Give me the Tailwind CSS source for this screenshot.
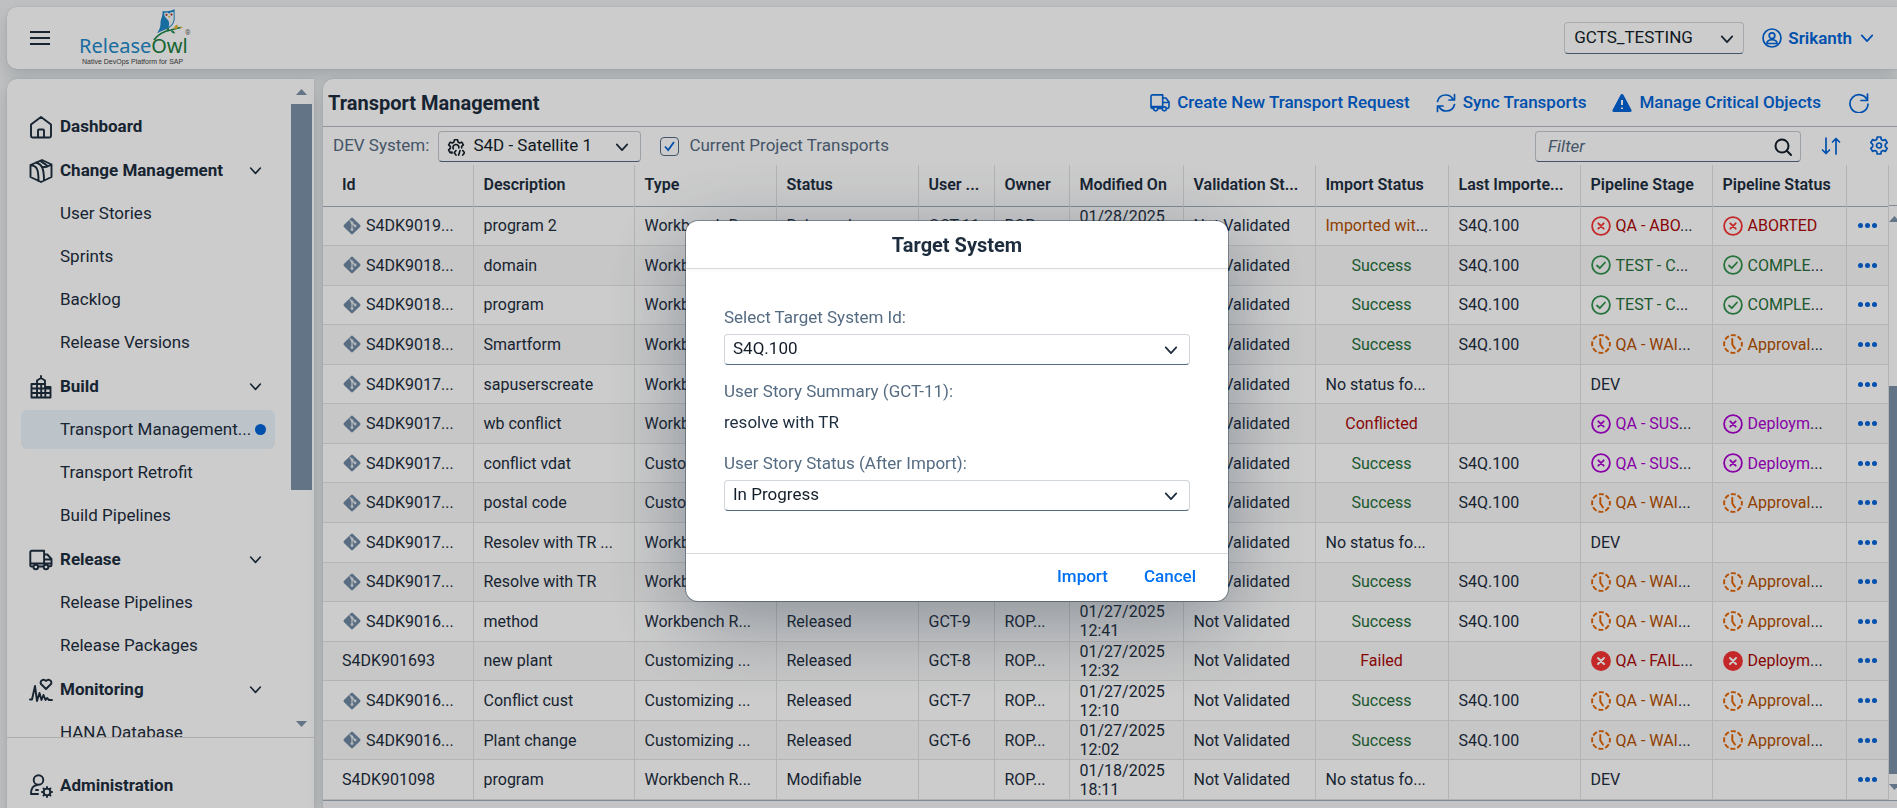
<!DOCTYPE html>
<html lang="en">
<head>
<meta charset="utf-8">
<title>ReleaseOwl - Transport Management</title>
<script src="https://cdn.jsdelivr.net/npm/@tailwindcss/browser@4"></script>
</head>
<body class="h-screen overflow-hidden bg-[#eff1f2] font-['Roboto',sans-serif] text-base text-[#1d2d3e]">
<svg class="hidden" aria-hidden="true">
  <symbol id="chev" viewBox="0 0 16 16"><path d="M2 5l6 6.500L14 5" fill="none" stroke="currentColor" stroke-width="2" stroke-linecap="round" stroke-linejoin="round"/></symbol>
  <symbol id="git" viewBox="0 0 18 18"><path d="M9 .5a1.200 1.200 0 0 1 .9.400l7.200 7.200a1.300 1.300 0 0 1 0 1.800l-7.200 7.200a1.300 1.300 0 0 1-1.800 0L.9 9.900a1.300 1.300 0 0 1 0-1.800L8.100.9A1.200 1.200 0 0 1 9 .5z" fill="#7089a3"/><path d="M6.800 3.400 9 5.600v7M9 6l3 3" stroke="#e4e8ec" stroke-width="1.200" fill="none"/><g fill="#e4e8ec"><circle cx="9" cy="5.800" r="1.400"/><circle cx="9" cy="12.600" r="1.400"/><circle cx="12.100" cy="9" r="1.400"/></g></symbol>
  <symbol id="x" viewBox="0 0 20 20"><g fill="none" stroke="currentColor" stroke-width="1.800"><circle cx="10" cy="10" r="8.900"/><path d="m7.300 7.300 5.400 5.400m0-5.400-5.400 5.400" stroke-linecap="round"/></g></symbol>
  <symbol id="xf" viewBox="0 0 20 20"><circle cx="10" cy="10" r="9.900" fill="currentColor"/><path d="m7 7 6 6m0-6-6 6" stroke="#fff" stroke-width="2" stroke-linecap="round"/></symbol>
  <symbol id="ok" viewBox="0 0 20 20"><g fill="none" stroke="currentColor" stroke-width="1.800"><circle cx="10" cy="10" r="8.900"/><path d="m6 10.500 2.800 2.700L14 7.500" stroke-linecap="round" stroke-linejoin="round"/></g></symbol>
  <symbol id="wait" viewBox="0 0 20 20"><g fill="none" stroke="currentColor" stroke-width="1.900"><circle cx="10" cy="10" r="8.900" stroke-dasharray="5 1.990" stroke-dashoffset="2.500"/><path d="M9.300 5v5.500l2.700 4" stroke-linecap="round" stroke-linejoin="round"/></g></symbol>
  <symbol id="gear" viewBox="0 0 20 20"><g fill="none" stroke="currentColor" stroke-width="1.700" stroke-linejoin="round"><path d="M8.200 1h3.600l.5 2.500 1.700 1 2.400-.9 1.800 3.100-1.900 1.700v2.200l1.900 1.700-1.800 3.100-2.400-.9-1.700 1-.5 2.500H8.200l-.5-2.500-1.700-1-2.400.9-1.800-3.100 1.900-1.700V8.400L1.800 6.700l1.800-3.100 2.400.9 1.700-1z"/><circle cx="10" cy="9.500" r="2.500"/></g></symbol>
  <symbol id="truck" viewBox="0 0 22 20"><g fill="none" stroke="currentColor" stroke-width="1.800" stroke-linejoin="round"><path d="M4 16H2.500a1.500 1.500 0 0 1-1.500-1.500v-12A1.500 1.500 0 0 1 2.500 1H14v13M14 4.500h3.500L21 9v5.500a1.500 1.500 0 0 1-1.500 1.500H18M8.500 16h5M14 9.500h7M1 14h13"/><circle cx="6.200" cy="16.500" r="2.200"/><circle cx="15.800" cy="16.500" r="2.200"/></g></symbol>
</svg>

<div class="flex h-full flex-col gap-[10px] pl-[7px] pt-[7px]">
  <header class="flex h-[62px] shrink-0 items-center rounded-l-[10px] bg-white pr-[23px] shadow-[0_0_2px_#22354829,0_8px_16px_#22354829]">
    <button class="ml-[23px] flex h-[30px] w-5 items-center" aria-label="Menu"><svg class="h-4 w-5" viewBox="0 0 20 16"><path d="M0 2h20M0 8h20M0 14h20" stroke="#1d2d3e" stroke-width="1.800"/></svg></button>
    <a href="#" class="relative ml-[29px] block h-[62px] w-[110px] leading-none" aria-label="ReleaseOwl">
      <svg class="absolute left-[71px] top-0 h-10 w-9" viewBox="0 0 36 40">
        <path d="M12.500 4c2 .6 4 .2 6 0 2.500-.2 4.500-.8 6-2 .4 3.500 0 5 .2 8 .3 5-1.700 8.500-5.700 11-4 1.800-8 3-12 5.500 2.500-4 3.500-6.500 3.500-10 0-5 2.500-7 2-12.500z" fill="#1f87c9"/>
        <path d="M14 6.500c2-1.500 4-1 5 .3 1-1.300 2.500-1.800 4.500-1.800.3 3 .2 5 .2 7-.2 3-1.700 6.200-5.200 8 1.200-3 .8-5.500-1-7.500C16 11 14.500 10 14 6.500z" fill="#f6f8fa"/>
        <path d="m18.200 9 .9 2.200.9-2.200z" fill="#e6a21b"/><circle cx="16.500" cy="7.800" r="1.100" fill="#a3352c"/><circle cx="21.500" cy="7.600" r="1.100" fill="#a3352c"/>
        <path d="M4 33c5-7 11-9 17-10 4-1 6-2 10-2.500" fill="none" stroke="#1c8446" stroke-width="1.700"/><path d="M17 24c-1-2 0-3 2-3 0 2 0 3-2 3zM21 23.500c2-.5 4 1 4 3-2 0-4-1-4-3z" fill="#1c8446"/><path d="M25 22c-1-2 0-3 2-4 1 2 0 4-2 4zM30 20.500h2.500" fill="#e9b830" stroke="#e9b830"/>
      </svg>
      <span class="absolute left-0 top-[29px] font-['Noto_Sans'] text-xl leading-5 text-[#2189c9]">Release<span class="text-[#1b7d40]">Owl</span></span>
      <span class="absolute left-[106px] top-[23px] text-[7px] text-[#6b6b6b]">®</span>
      <span class="absolute left-[3px] top-[51px] whitespace-nowrap font-['Liberation_Sans'] text-[7px] text-[#444]">Native DevOps Platform for SAP</span>
    </a>
    <div class="relative ml-auto">
      <select aria-label="Project" class="h-8 w-[180px] appearance-none rounded border border-[#d0d5db] border-b-[#556b82] bg-white pb-px pl-[9px] text-[17px] text-[#131e29]"><option>GCTS_TESTING</option></select>
      <svg class="pointer-events-none absolute right-[10px] top-[10px] h-[14px] w-[14px]"><use href="#chev"/></svg>
    </div>
    <button class="ml-[18px] flex items-center gap-[6px] text-[17px] font-semibold leading-6 text-[#0064d9]">
      <svg class="h-5 w-5" viewBox="0 0 20 20"><g fill="none" stroke="currentColor" stroke-width="1.700"><circle cx="10" cy="10" r="9"/><circle cx="10" cy="7.700" r="2.800"/><path d="M5 15.500c0-5 10-5 10 0z" stroke-linejoin="round"/></g></svg>
      Srikanth
      <svg class="ml-0.5 h-[14px] w-[14px]"><use href="#chev"/></svg>
    </button>
  </header>

  <div class="flex min-h-0 flex-1 gap-[9px]">
    <aside class="flex w-[307px] shrink-0 flex-col rounded-tl-[10px] bg-white shadow-[0_0_2px_#22354829,0_8px_16px_#22354829]">
      <div class="relative min-h-0 flex-1 overflow-hidden border-b border-[#d9d9d9] pl-[14px] pt-7">
        <nav id="nav" class="flex w-[254px] flex-col gap-[5px]"></nav>
        <div class="absolute inset-y-0 right-[2px] flex w-[21px] flex-col items-center py-[10px]" aria-hidden="true">
          <svg class="h-[6px] w-[11px]" viewBox="0 0 11 6"><path d="M0 6 5.500 0 11 6z" fill="#7b91a8"/></svg>
          <div class="mt-[9px] h-[386px] w-full bg-[#7b91a8]"></div>
          <svg class="mt-auto h-[6px] w-[11px]" viewBox="0 0 11 6"><path d="M0 0h11L5.500 6z" fill="#7b91a8"/></svg>
        </div>
      </div>
      <div class="h-[70px] shrink-0 pl-[14px] pt-7">
        <a href="#" class="flex h-[39px] items-center pl-2 text-[17px] font-bold"><svg class="mr-[7px] h-6 w-6" viewBox="0 0 24 24"><g fill="none" stroke="currentColor" stroke-width="1.900" stroke-linecap="round" stroke-linejoin="round"><circle cx="9.500" cy="6" r="4.800"/><path d="M9 20H2c0-6 2-8.500 6-9M7 16h2"/><circle cx="18" cy="18" r="3.400"/><path d="M18 13v1.600M18 21.400V23M13 18h1.600M21.400 18H23M14.500 14.500l1 1M20.500 20.500l1 1M14.500 21.500l1-1M20.500 15.500l1-1"/></g></svg>Administration</a>
      </div>
    </aside>

    <main class="flex min-w-0 flex-1 flex-col rounded-tl-[10px] bg-white shadow-[0_0_2px_#22354829,0_8px_16px_#22354829]">
      <div class="flex h-12 shrink-0 items-center border-b border-[#b3bac2] pl-[5px] pr-[28px] text-[17px] font-medium text-[#0064d9]">
        <h1 class="mr-auto text-xl font-bold leading-6 text-[#1d2d3e]">Transport Management</h1>
        <button class="flex items-center gap-[7px]"><svg class="h-[18px] w-5"><use href="#truck"/></svg>Create New Transport Request</button>
        <button class="ml-[26px] flex items-center gap-[7px]"><svg class="h-5 w-5" viewBox="0 0 20 20"><path d="M1.500 8.500C2.500 4 6 2 10 2c3 0 5.500 1.500 7 4.500M18.500 1.500V7H13M18.500 11.500C17.500 16 14 18 10 18c-3 0-5.500-1.500-7-4.500M1.500 18.500V13H7" fill="none" stroke="currentColor" stroke-width="1.700" stroke-linejoin="round" stroke-linecap="round"/></svg>Sync Transports</button>
        <button class="ml-[26px] flex items-center gap-[7px]"><svg class="h-5 w-5" viewBox="0 0 20 20"><path d="M10 1c.7 0 1.200.4 1.500 1l8 15c.4 1-.2 2-1.300 2H1.800C.7 19 .1 18 .5 17l8-15c.3-.6.800-1 1.500-1z" fill="currentColor"/><path d="M10 7v5M10 14.500v1.600" stroke="#fff" stroke-width="2"/></svg>Manage Critical Objects</button>
        <button class="ml-[28px]" aria-label="Refresh"><svg class="h-5 w-5" viewBox="0 0 20 20"><path d="M18.500 1v6.500H12M18.200 7A9 9 0 1 0 19 11" fill="none" stroke="currentColor" stroke-width="1.700" stroke-linecap="round" stroke-linejoin="round"/></svg></button>
      </div>
      <div class="flex h-[38px] shrink-0 items-center bg-white pl-[10px] pr-[8px] text-[17px]">
        <label for="dev" class="text-[#556b82]">DEV System:</label>
        <div class="relative ml-[9px]">
          <svg class="absolute left-[9px] top-[7px] h-[18px] w-[18px] text-[#131e29]" viewBox="0 0 20 20"><g fill="none" stroke="currentColor" stroke-width="1.800" stroke-linejoin="round" stroke-linecap="round"><path d="M5.500 17 5.600 15.500l-2 .9-1.800-3.100 1.900-1.700V9.400L1.800 7.700l1.800-3.100 2.400.9 1.700-1L8.200 2h3.600l.5 2.500 1.700 1 2.400-.9 1.800 3.100-1.900 1.700v1.600"/><path d="M7 12a3.300 3.300 0 1 1 6.200-1M10 14l-2 2.500 2 2.500M13 19l1.500-5M17.500 14l2 2.500-2 2.500"/></g></svg>
          <select id="dev" class="h-[31px] w-[203px] appearance-none rounded border border-[#c4cad1] border-b-[#556b82] bg-transparent pb-px pl-[34px] text-[#131e29]"><option>S4D - Satellite 1</option></select>
          <svg class="pointer-events-none absolute right-[12px] top-[9px] h-[14px] w-[14px]"><use href="#chev"/></svg>
        </div>
        <label class="ml-[19px] flex items-center gap-[10px] text-[#556b82]">
          <span class="relative flex"><input type="checkbox" checked class="h-[19px] w-[19px] appearance-none rounded border border-[#556b82] bg-white"><svg class="pointer-events-none absolute inset-0 h-[19px] w-[19px]" viewBox="0 0 19 19"><path d="m5 9.500 3.200 3.500L14 5" fill="none" stroke="#0064d9" stroke-width="1.800"/></svg></span>
          Current Project Transports</label>
        <div class="relative ml-auto">
          <input type="search" aria-label="Filter" placeholder="Filter" class="block h-[31px] w-[266px] rounded border border-[#c4cad1] border-b-[#556b82] bg-white px-3 placeholder:italic placeholder:text-[#556b82]">
          <svg class="absolute right-[9px] top-[7px] h-[18px] w-[18px]" viewBox="0 0 18 18"><g fill="none" stroke="#131e29" stroke-width="2" stroke-linecap="round"><circle cx="8" cy="8" r="6.500"/><path d="m13 13 4 4"/></g></svg>
        </div>
        <button class="ml-5 text-[#0064d9]" aria-label="Sort"><svg class="h-[18px] w-5" viewBox="0 0 20 18"><path d="M5 1v15.500M1.500 13 5 16.500 8.500 13M15 17V1.500M11.500 5 15 1.500 18.500 5" fill="none" stroke="currentColor" stroke-width="1.700" stroke-linecap="round" stroke-linejoin="round"/></svg></button>
        <button class="ml-[28px] text-[#0064d9]" aria-label="Settings"><svg class="h-5 w-5"><use href="#gear"/></svg></button>
      </div>
      <div class="flex min-h-0 flex-1 border-b border-[#a3adb8]">
        <table class="h-full w-full table-fixed border-collapse">
          <colgroup><col class="w-[150px]"><col class="w-[161px]"><col class="w-[142px]"><col class="w-[142px]"><col class="w-[76px]"><col class="w-[75px]"><col class="w-[114px]"><col class="w-[132px]"><col class="w-[133px]"><col class="w-[132px]"><col class="w-[132px]"><col class="w-[134px]"><col class="w-[42px]"></colgroup>
          <thead><tr id="head" class="h-[41px] border-b border-[#a3adb8]"></tr></thead>
          <tbody id="rows"></tbody>
        </table>
        <div class="flex w-[9px] shrink-0 flex-col overflow-hidden bg-white" aria-hidden="true">
          <div class="h-[41px] shrink-0 border-b border-[#a3adb8]"></div>
          <svg class="mt-[10px] h-[6px] w-[11px] shrink-0" viewBox="0 0 11 6"><path d="M0 6 5.500 0 11 6z" fill="#7b91a8"/></svg>
          <div class="mt-[164px] h-[388px] bg-[#7b91a8]"></div>
          <svg class="mb-[10px] mt-auto h-[6px] w-[11px] shrink-0" viewBox="0 0 11 6"><path d="M0 0h11L5.500 6z" fill="#7b91a8"/></svg>
        </div>
      </div>
      <div class="h-[7px] shrink-0 bg-[#f5f5f8]"></div>
    </main>
  </div>
</div>

<div class="fixed inset-0 flex items-center justify-center bg-black/20 pl-[17px] pt-[13px]">
  <section role="dialog" aria-modal="true" aria-labelledby="dlg" class="flex w-[542px] flex-col rounded-xl bg-white text-[17px] shadow-[0_0_0_1px_#2235486b,0_20px_80px_#22354866]">
    <h2 id="dlg" class="flex h-12 items-center justify-center border-b border-[#d9d9d9] pt-0.5 text-xl font-bold shadow-[0_2px_2px_#00000008]">Target System</h2>
    <div class="flex flex-col px-[38px] pb-[42px] pt-9">
      <label for="sys" class="leading-6 text-[#556b82]">Select Target System Id:</label>
      <div class="relative mt-[5px]">
        <select id="sys" class="block h-[31px] w-full appearance-none rounded border border-[#d0d5db] border-b-[#556b82] bg-white pb-px pl-2 text-[#131e29]"><option>S4Q.100</option></select>
        <svg class="pointer-events-none absolute right-[12px] top-[9px] h-[14px] w-[14px]"><use href="#chev"/></svg>
      </div>
      <span class="mt-[14px] leading-6 text-[#556b82]">User Story Summary (GCT-11):</span>
      <span class="mt-[7px] leading-6">resolve with TR</span>
      <label for="st" class="mt-[17px] leading-6 text-[#556b82]">User Story Status (After Import):</label>
      <div class="relative mt-[5px]">
        <select id="st" class="block h-[31px] w-full appearance-none rounded border border-[#d0d5db] border-b-[#556b82] bg-white pb-px pl-2 text-[#131e29]"><option>In Progress</option></select>
        <svg class="pointer-events-none absolute right-[12px] top-[9px] h-[14px] w-[14px]"><use href="#chev"/></svg>
      </div>
    </div>
    <div class="flex h-12 items-center justify-end gap-9 border-t border-[#d9d9d9] pr-8 font-medium text-[#0070f2]">
      <button>Import</button><button>Cancel</button>
    </div>
  </section>
</div>

<script>
const g = p => `<svg class="mr-[7px] h-6 w-6 shrink-0" viewBox="0 0 24 24"><g fill="none" stroke="currentColor" stroke-width="1.900" stroke-linecap="round" stroke-linejoin="round">${p}</g></svg>`;
const nav = [
  ['Dashboard', g('<path d="M2 21V9.500L12 2l10 7.500V21a1.500 1.500 0 0 1-1.500 1.500h-17A1.500 1.500 0 0 1 2 21zM9 22v-6.500a1 1 0 0 1 1-1h4a1 1 0 0 1 1 1V22"/>'), null],
  ['Change Management', g('<path d="M1.500 6 13 1l9.500 4.500V18L12 23 1.500 18zM1.500 6c6 1 8 3 8 16M7 3.500c5 1.500 8 4 8 18M12.500 1.500c-3 1 5 3 6 6L22.500 5.500M13 8.500l5.500-1"/>'), ['User Stories','Sprints','Backlog','Release Versions']],
  ['Build', g('<path d="M2.500 9H8V5.500L12 3l4 2.500V12h5.500v10.500h-19zM12 3V1M8 9v13M12.200 10v12M16.300 12v10M3 13.500h18M3 18h18M8 9h8"/>'), ['Transport Management...','Transport Retrofit','Build Pipelines']],
  ['Release', g('<path d="M4 18.500H2.500A1.200 1.200 0 0 1 1.300 17V4a1.300 1.300 0 0 1 1.300-1.300h12.500V16M15.300 6.500h3L22.500 11v6a1.300 1.300 0 0 1-1.300 1.300H20M9.500 18.500H14M15.500 11.500h7M1.500 15.500h21"/><circle cx="6.800" cy="19" r="2.300"/><circle cx="17" cy="19" r="2.300"/>'), ['Release Pipelines','Release Packages']],
  ['Monitoring', g('<path d="M1 21.500h2L6 8l2 15 2.500-8 2 7 2-5 2 5 1.500-2 2 2h3M17 11l-5-5c-1.500-3 2.500-6 5-3 2.500-3 6.500 0 5 3z"/>'), ['HANA Database']],
];
document.getElementById('nav').innerHTML = nav.map(([t, icon, kids]) => `<div class="flex flex-col gap-1">` +
  `<a href="#" class="flex h-[39px] items-center pl-2 pr-[13px] text-[17px] font-bold">${icon}${t}${kids ? '<svg class="ml-auto h-[13px] w-[13px]"><use href="#chev"/></svg>' : ''}</a>` +
  (kids || []).map(k => k.startsWith('Transport M')
    ? `<a href="#" class="flex h-[39px] items-center rounded-md bg-[#ebf5fd] pl-[39px] pr-[9px] text-[17px]">${k}<span class="ml-auto h-[11px] w-[11px] shrink-0 rounded-full bg-[#0064d9]"></span></a>`
    : `<a href="#" class="flex h-[39px] items-center pl-[39px] text-[17px]">${k}</a>`).join('') + `</div>`).join('');

const heads = ['Id','Description','Type','Status','User ...','Owner','Modified On','Validation St...','Import Status','Last Importe...','Pipeline Stage','Pipeline Status',''];
document.getElementById('head').innerHTML = heads.map((h, i) =>
  `<th scope="col" class="${i ? 'border-l pl-[10px]' : 'pl-[19px]'} border-[#e1e1e1] p-0 text-left text-base font-semibold whitespace-nowrap${i === 12 ? ' border-r' : ''}">${h}</th>`).join('');

const st = {
  A: ['x', 'text-[#f53232]', 'text-[#aa0808]', 'QA - ABO...', 'ABORTED'],
  C: ['ok', 'text-[#30914c]', 'text-[#256f3a]', 'TEST - C...', 'COMPLE...'],
  W: ['wait', 'text-[#e26300]', 'text-[#b44f00]', 'QA - WAI...', 'Approval...'],
  S: ['x', 'text-[#ab00d0]', 'text-[#ab00d0]', 'QA - SUS...', 'Deploym...'],
  F: ['xf', 'text-[#f53232]', 'text-[#aa0808]', 'QA - FAIL...', 'Deploym...'],
};
const WB = 'Workbench R...', CU = 'Customizing ...';
const data = [
  ['S4DK9019...','program 2',WB,'Released','GCT-11','01/28/2025','Imported wit...','A'],
  ['S4DK9018...','domain',WB,'','','','Success','C'],
  ['S4DK9018...','program',WB,'','','','Success','C'],
  ['S4DK9018...','Smartform',WB,'','','','Success','W'],
  ['S4DK9017...','sapuserscreate',WB,'','','','No status fo...','D'],
  ['S4DK9017...','wb conflict',WB,'','','','Conflicted','S'],
  ['S4DK9017...','conflict vdat',CU,'','','','Success','S'],
  ['S4DK9017...','postal code',CU,'','','','Success','W'],
  ['S4DK9017...','Resolev with TR ...',WB,'','','','No status fo...','D'],
  ['S4DK9017...','Resolve with TR',WB,'','','','Success','W'],
  ['S4DK9016...','method',WB,'Released','GCT-9','01/27/2025 12:41','Success','W'],
  ['S4DK901693','new plant',CU,'Released','GCT-8','01/27/2025 12:32','Failed','F'],
  ['S4DK9016...','Conflict cust',CU,'Released','GCT-7','01/27/2025 12:10','Success','W'],
  ['S4DK9016...','Plant change',CU,'Released','GCT-6','01/27/2025 12:02','Success','W'],
  ['S4DK901098','program',WB,'Modifiable','','01/18/2025 18:11','No status fo...','D'],
];
const dots = (t, c) => t.endsWith('...') ? `<span class="${c}">${t.slice(0, -3)}</span>...` : `<span class="${c}">${t}</span>`;
const td = (c, x = '') => `<td class="border-l border-[#e1e1e1] p-0 pl-[10px] whitespace-nowrap ${x}">${c}</td>`;
const date = d => { const [a, b] = d.split(' '); return d ? `${a}<br>${b || '&nbsp;'}` : ''; };
const pipe = (k, i) => k === 'D' ? (i === 3 ? 'DEV' : '') :
  `<div class="flex items-center gap-[5px]"><svg class="h-5 w-5 shrink-0 ${st[k][1]}"><use href="#${st[k][0]}"/></svg><span>${dots(st[k][i], st[k][2])}</span></div>`;
const imp = t => t.startsWith('Imported') ? td(dots(t, 'text-[#b44f00]'))
  : t.startsWith('No') ? td(t)
  : td(t, 'pr-[10px] text-center ' + (t === 'Success' ? 'text-[#256f3a]' : 'text-[#aa0808]'));
document.getElementById('rows').innerHTML = data.map((r, n) => {
  const last = !['Conflicted','Failed'].includes(r[6]) && r[7] !== 'D' ? 'S4Q.100' : '';
  const owner = r[5] ? 'ROP...' : '';
  return `<tr class="h-[39px] border-b border-[#e1e1e1] leading-[19px] ${n % 2 ? 'bg-[#f9f9f9]' : ''}">` +
    `<td class="p-0 pl-[19px] whitespace-nowrap"><div class="flex items-center gap-[5px]">${r[0].endsWith('...') ? '<svg class="ml-px h-[18px] w-[18px] shrink-0"><use href="#git"/></svg>' : ''}${r[0]}</div></td>` +
    td(r[1]) + td(r[2]) + td(r[3]) + td(r[4]) + td(owner) + td(date(r[5])) + td('Not Validated') + imp(r[6]) +
    td(last) + td(pipe(r[7], 3)) + td(pipe(r[7], 4)) +
    `<td class="border-x border-[#e1e1e1] p-0"><button class="mx-auto flex gap-[2px]" aria-label="More"><i class="h-[5px] w-[5px] rounded-full bg-[#0064d9]"></i><i class="h-[5px] w-[5px] rounded-full bg-[#0064d9]"></i><i class="h-[5px] w-[5px] rounded-full bg-[#0064d9]"></i></button></td></tr>`;
}).join('');
</script>
</body>
</html>
